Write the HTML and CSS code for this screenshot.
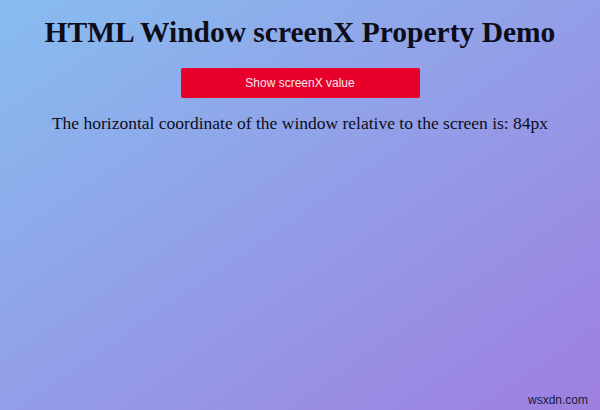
FILE: index.html
```html
<!DOCTYPE html>
<html>
<head>
<meta charset="utf-8">
<link rel="stylesheet" href="styles.css">
</head>
<body>
<main class="page">
  <h1 class="title">HTML Window screenX Property Demo</h1>
  <button class="btn">Show screenX value</button>
  <p class="result">The horizontal coordinate of the window relative to the screen is: 84px</p>
</main>
<div class="watermark">wsxdn.com</div>
</body>
</html>
```
FILE: styles.css
```css
html, body {
  margin: 0;
  padding: 0;
  width: 600px;
  height: 410px;
  overflow: hidden;
}
body {
  background: linear-gradient(to bottom right, #87bdef, #9e7fe0);
  font-family: "Liberation Serif", "Times New Roman", serif;
  color: #0d0d1a;
  position: relative;
}
.page {
  display: flex;
  flex-direction: column;
  align-items: center;
  padding-top: 15px;
}
.title {
  margin: 0;
  font-size: 29.5px;
  font-weight: bold;
  line-height: 34px;
}
.btn {
  margin-top: 19px;
  width: 239px;
  height: 30px;
  border: none;
  border-radius: 2px;
  background: #e8002b;
  color: #f4e6ee;
  font-family: "Liberation Sans", Arial, sans-serif;
  font-size: 12px;
  padding: 0;
}
.result {
  margin: 14px 0 0;
  font-size: 17.5px;
  line-height: 22px;
}
.watermark {
  position: absolute;
  right: 12px;
  bottom: 3px;
  font-family: "Liberation Sans", Arial, sans-serif;
  font-size: 12px;
  color: #1a1a3a;
}
```
